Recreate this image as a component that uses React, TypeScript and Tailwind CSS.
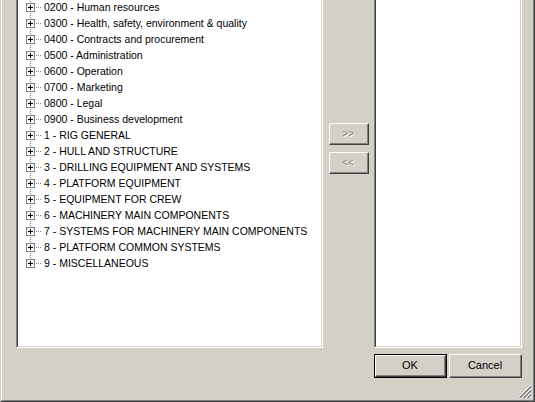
import React from 'react';

const treeItems = [
  '0200 - Human resources',
  '0300 - Health, safety, environment & quality',
  '0400 - Contracts and procurement',
  '0500 - Administration',
  '0600 - Operation',
  '0700 - Marketing',
  '0800 - Legal',
  '0900 - Business development',
  '1 - RIG GENERAL',
  '2 - HULL AND STRUCTURE',
  '3 - DRILLING EQUIPMENT AND SYSTEMS',
  '4 - PLATFORM EQUIPMENT',
  '5 - EQUIPMENT FOR CREW',
  '6 - MACHINERY MAIN COMPONENTS',
  '7 - SYSTEMS FOR MACHINERY MAIN COMPONENTS',
  '8 - PLATFORM COMMON SYSTEMS',
  '9 - MISCELLANEOUS',
];

const TreeConnector: React.FC<{ last: boolean }> = ({ last }) => {
  const vDots = [];
  const end = last ? 4 : 16;
  for (let y = 0; y < end; y += 2) vDots.push(<rect key={`v${y}`} x={12} y={y} width={1} height={1} />);
  const hDots = [];
  for (let x = 18; x <= 22; x += 2) hDots.push(<rect key={`h${x}`} x={x} y={8} width={1} height={1} />);
  return (
    <svg width="24" height="16" viewBox="0 0 24 16" className="shrink-0" shapeRendering="crispEdges">
      <g fill="#808080">
        {vDots}
        {hDots}
      </g>
      <rect x={8.5} y={4.5} width={8} height={8} fill="#fff" stroke="#808080" />
      <rect x={10} y={8} width={5} height={1} fill="#000" />
      <rect x={12} y={6} width={1} height={5} fill="#000" />
    </svg>
  );
};

const Win98Button: React.FC<{ children: React.ReactNode; className?: string; disabled?: boolean }> = ({
  children,
  className = '',
  disabled,
}) => (
  <div className={`border-t border-l border-t-white border-l-white border-b border-r border-b-[#404040] border-r-[#404040] bg-[#d4d0c8] ${className}`}>
    <div className="w-full h-full border-b border-r border-b-[#808080] border-r-[#808080] flex items-center justify-center">
      <span className={disabled ? 'text-[#808080] [text-shadow:1px_1px_0_#fff]' : 'text-black'}>{children}</span>
    </div>
  </div>
);

const SunkenPanel: React.FC<{ children?: React.ReactNode; className?: string }> = ({ children, className = '' }) => (
  <div className={`border-l border-b border-r border-l-[#808080] border-r-white border-b-white ${className}`}>
    <div className="w-full h-full border-l border-b border-r border-l-[#404040] border-r-[#d4d0c8] border-b-[#d4d0c8] bg-white overflow-hidden">
      {children}
    </div>
  </div>
);

export default function App() {
  return (
    <div
      className="w-[535px] h-[402px] overflow-hidden bg-[#d4d0c8] border-l border-l-[#d4d0c8] border-r border-r-[#404040] border-b border-b-[#404040] text-[11px] text-black select-none"
      style={{ fontFamily: '"Liberation Sans", Arial, sans-serif' }}
    >
      <div className="relative w-full h-full border-l border-l-white border-r border-r-[#808080] border-b border-b-[#808080] flex flex-col">
        <div className="flex h-[348px] pl-[14px]">
          <SunkenPanel className="w-[307px] h-full">
            <div className="-mt-px text-[10.5px]">
              {treeItems.map((item, i) => (
                <div key={item} className="flex items-center h-[16px] leading-[16px]">
                  <TreeConnector last={i === treeItems.length - 1} />
                  <span className="ml-[2px] whitespace-nowrap">{item}</span>
                </div>
              ))}
            </div>
          </SunkenPanel>

          <div className="w-[51px] flex flex-col items-center pt-[123px] gap-[7px]">
            <Win98Button className="w-[40px] h-[22px] text-[10px]" disabled>
              &gt;&gt;
            </Win98Button>
            <Win98Button className="w-[40px] h-[22px] text-[10px]" disabled>
              &lt;&lt;
            </Win98Button>
          </div>

          <SunkenPanel className="w-[148px] h-full" />
        </div>

        <div className="flex pl-[372px] pt-[6px] gap-[2px]">
          <div className="w-[73px] h-[24px] border border-black">
            <Win98Button className="w-full h-full">OK</Win98Button>
          </div>
          <Win98Button className="w-[73px] h-[24px]">Cancel</Win98Button>
        </div>

        {/* size grip */}
        <svg className="absolute right-[1px] bottom-[1px]" width="15" height="15" viewBox="0 0 15 15" shapeRendering="crispEdges">
          {[0, 4, 8].map((o) => (
            <g key={o}>
              <line x1={14} y1={1 + o} x2={1 + o} y2={14} stroke="#fff" strokeWidth={1} />
              <line x1={14} y1={2 + o} x2={2 + o} y2={14} stroke="#808080" strokeWidth={1} />
              <line x1={14} y1={3 + o} x2={3 + o} y2={14} stroke="#808080" strokeWidth={1} />
            </g>
          ))}
        </svg>
      </div>
    </div>
  );
}
